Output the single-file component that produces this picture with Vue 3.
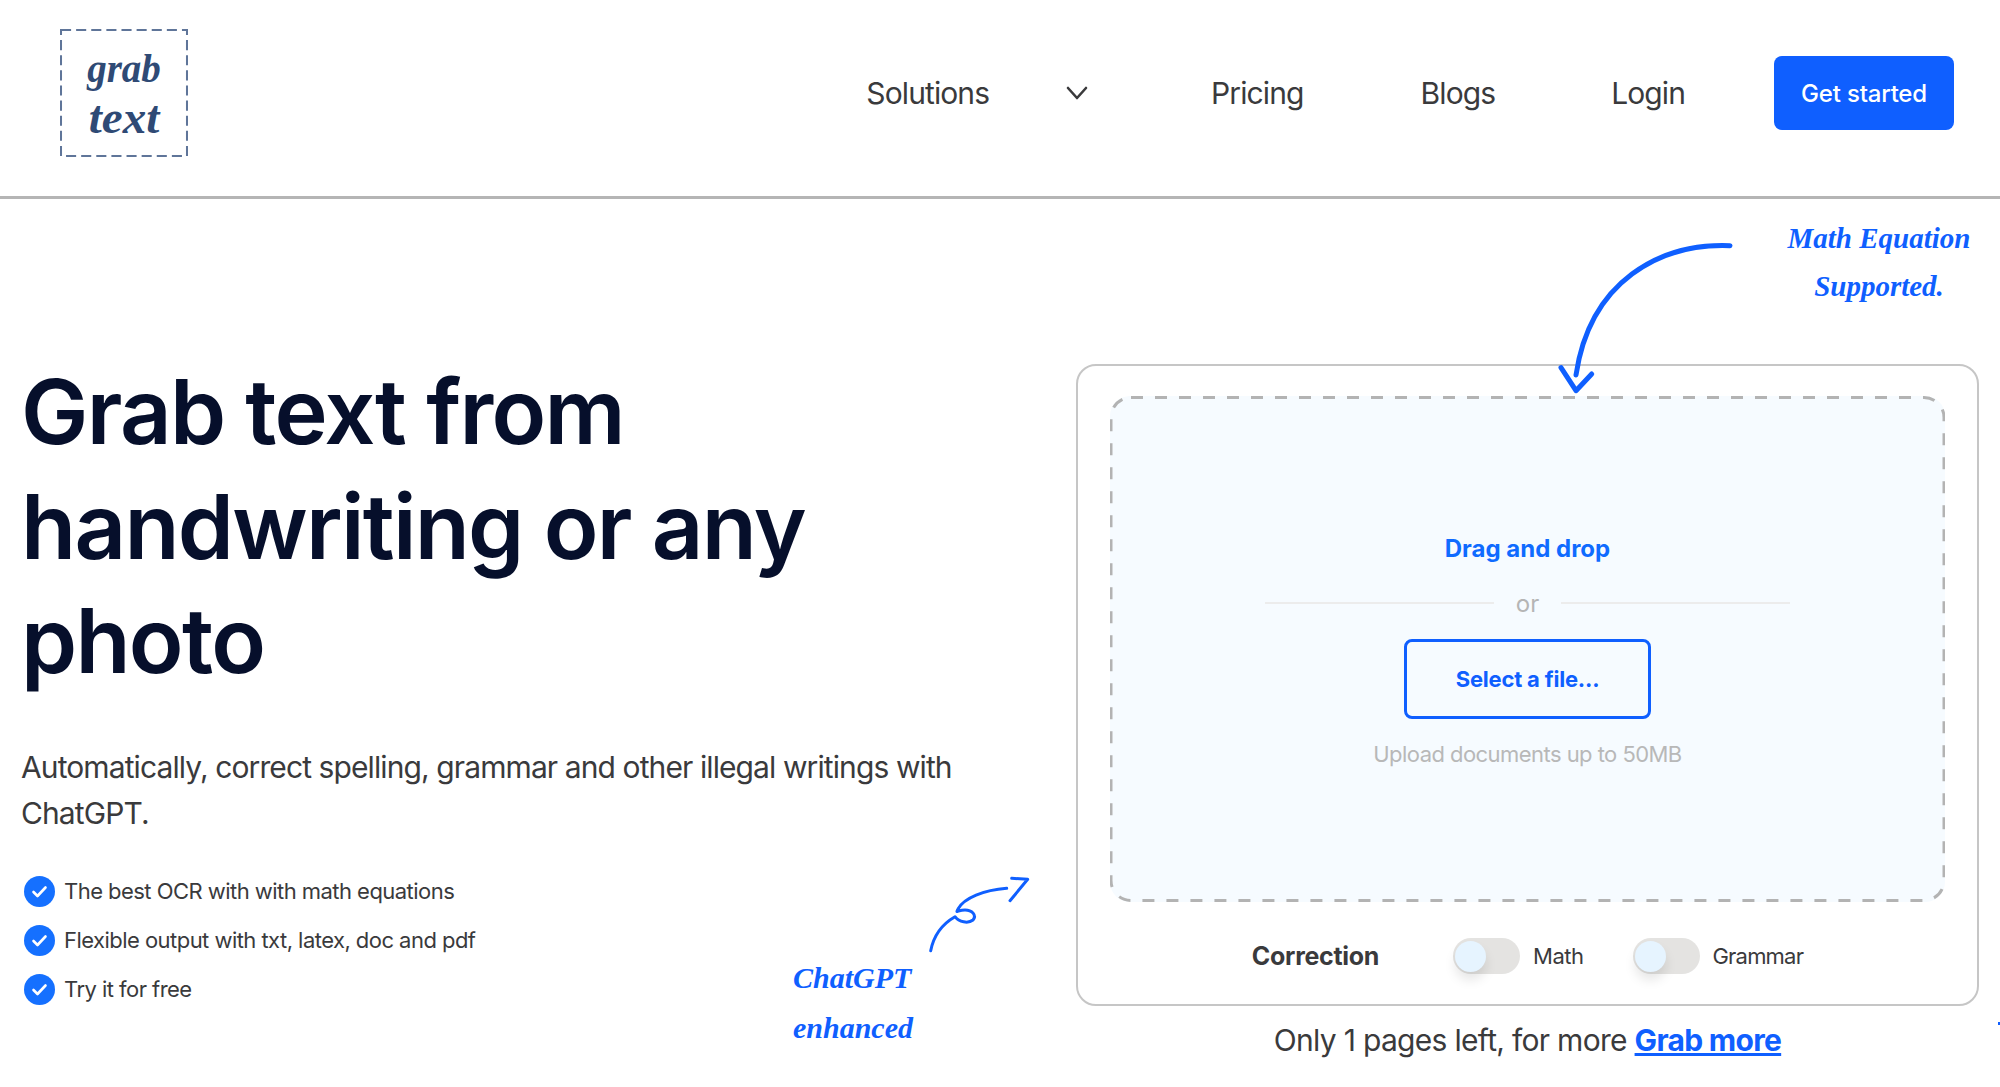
<template>
  <div class="page">
    <header class="topbar">
      <div class="logo">
        <svg class="dash" viewBox="0 0 127 127" fill="none"><rect x="1" y="1" width="125" height="125" stroke="#5f7599" stroke-width="2" stroke-dasharray="10 5"/></svg>
        <span class="logo-grab">grab</span>
        <span class="logo-text">text</span>
      </div>
      <nav class="nav">
        <a class="nav-link solutions">Solutions</a>
        <svg class="chevron" viewBox="0 0 24 16" fill="none" stroke="#3a3a3c" stroke-width="2.6" stroke-linecap="round" stroke-linejoin="round"><path d="M3 3l9 10 9-10"/></svg>
        <a class="nav-link pricing">Pricing</a>
        <a class="nav-link blogs">Blogs</a>
        <a class="nav-link login">Login</a>
        <button class="cta">Get started</button>
      </nav>
    </header>

    <main class="hero">
      <section class="intro">
        <h1>Grab text from handwriting or any photo</h1>
        <p class="sub">Automatically, correct spelling, grammar and other illegal writings with ChatGPT.</p>
        <ul class="features">
          <li v-for="item in features" :key="item">
            <svg class="tick" viewBox="0 0 31 31"><circle cx="15.5" cy="15.5" r="15.5" fill="#1570ff"/><path d="M9.5 16l4 4 8-8.500" fill="none" stroke="#fff" stroke-width="2.600" stroke-linecap="round" stroke-linejoin="round"/></svg>
            <span>{{ item }}</span>
          </li>
        </ul>
      </section>

      <section class="tool">
        <div class="card">
          <div class="drop">
            <svg class="dash" viewBox="0 0 835 506" fill="none"><rect x="1" y="1.5" width="833" height="503" rx="20" stroke="#b3b3b3" stroke-width="3" stroke-dasharray="12 12"/></svg>
            <div class="drag">Drag and drop</div>
            <div class="divider"><i></i><span>or</span><i></i></div>
            <button class="select">Select a file...</button>
            <div class="limit">Upload documents up to 50MB</div>
          </div>
          <div class="options">
            <strong>Correction</strong>
            <span class="switch"><b></b></span>
            <span class="opt-label first">Math</span>
            <span class="switch"><b></b></span>
            <span class="opt-label grammar">Grammar</span>
          </div>
        </div>
        <p class="left-note">Only 1 pages left, for more <a>Grab more</a></p>
      </section>
    </main>

    <div class="note note-math">Math Equation<br>Supported.</div>
    <svg class="arrow arrow-math" viewBox="0 0 180 160" fill="none" stroke="#0f5fff" stroke-width="5" stroke-linecap="round" stroke-linejoin="round">
      <path d="M170 4.700C100 2 30 40 16 134"/>
      <path d="M1 126.700L16 149.700L31.700 133"/>
    </svg>
    <div class="note note-gpt">ChatGPT<br>enhanced</div>
    <svg class="arrow arrow-gpt" viewBox="0 0 110 90" fill="none" stroke="#0f5fff" stroke-width="3" stroke-linecap="round" stroke-linejoin="round">
      <path d="M2.700 72.700C6 56 16 45 27 38.700C31 44 40 46 45 42C49 37 44 32 37 32C30 32 27 36 30 31C36 20 56 12 78.700 10.300"/>
      <path d="M83.700 .3L99.700 1.300L82 22.700"/>
    </svg>
    <span class="edge-dot"></span>
  </div>
</template>

<script setup>
const features = [
  'The best OCR with with math equations',
  'Flexible output with txt, latex, doc and pdf',
  'Try it for free',
]
</script>

<style>
html, body {
  margin: 0;
  background: #fff;
}
</style>

<style scoped>
.page {
  position: relative;
  width: 2000px;
  height: 1087px;
  overflow: hidden;
  background: #fff;
  font-family: Inter, "Liberation Sans", sans-serif;
  color: #3a3a3c;
}

.topbar {
  display: flex;
  justify-content: space-between;
  align-items: center;
  height: 196px;
  padding: 0 46px 0 60px;
  border-bottom: 3px solid #b5b5b5;
}

.logo {
  position: relative;
  display: flex;
  flex-direction: column;
  align-items: center;
  justify-content: center;
  width: 128px;
  height: 128px;
  box-sizing: border-box;
  padding-top: 5px;
  margin-top: -11px;
  font-family: "Liberation Serif", serif;
  font-style: italic;
  font-weight: 700;
  color: #2f4a75;
}

.dash {
  position: absolute;
  left: 0;
  top: 0;
  width: 100%;
  height: 100%;
}

.logo-grab {
  font-size: 39px;
  line-height: 44px;
}

.logo-text {
  font-size: 47px;
  line-height: 53px;
}

.nav {
  display: flex;
  align-items: center;
  margin-top: -10px;
}

.nav-link {
  font-size: 30px;
  letter-spacing: -0.9px;
}

.chevron {
  width: 24px;
  height: 16px;
  margin-left: 76px;
}

.pricing { margin-left: 122px; }
.blogs { margin-left: 117px; }
.login { margin-left: 116px; }

.cta {
  width: 180px;
  height: 74px;
  margin-left: 89px;
  border: none;
  border-radius: 8px;
  background: #0f5fff;
  color: #fff;
  font-family: inherit;
  font-size: 24px;
  font-weight: 500;
  letter-spacing: -0.2px;
}

.hero {
  display: flex;
  justify-content: space-between;
  padding: 0 21px;
}

.intro {
  width: 960px;
  padding-top: 156px;
}

h1 {
  margin: 0;
  width: 860px;
  font-size: 90px;
  line-height: 114.5px;
  font-weight: 600;
  letter-spacing: -1.7px;
  color: #060f2b;
}

.sub {
  margin: 45px 0 0;
  font-size: 30px;
  line-height: 46px;
  letter-spacing: -0.9px;
}

.features {
  margin: 40px 0 0 3px;
  padding: 0;
  list-style: none;
}

.features li {
  display: flex;
  align-items: center;
  gap: 9px;
  height: 31px;
  margin-bottom: 18px;
  font-size: 22px;
  letter-spacing: -0.54px;
}

.tick {
  width: 31px;
  height: 31px;
}

.tool {
  width: 903px;
  padding-top: 165px;
}

.card {
  height: 642px;
  box-sizing: border-box;
  padding: 30px 32px 0;
  border: 2px solid #c6c6c6;
  border-radius: 20px;
}

.drop {
  position: relative;
  display: flex;
  flex-direction: column;
  align-items: center;
  height: 506px;
  box-sizing: border-box;
  padding-top: 138px;
  border-radius: 20px;
  background: #f6fbff;
}

.drag {
  font-size: 24px;
  line-height: 30px;
  font-weight: 700;
  color: #0f6bff;
}

.divider {
  display: flex;
  align-items: center;
  gap: 22px;
  width: 525px;
  height: 30px;
  margin-top: 24px;
  font-size: 24px;
  color: #b5b5b5;
}

.divider i {
  flex: 1;
  height: 2px;
  background: #ececec;
}

.select {
  position: relative;
  width: 247px;
  height: 80px;
  margin-top: 21px;
  border: 3px solid #0f5fff;
  border-radius: 8px;
  background: transparent;
  color: #0f5fff;
  font-family: inherit;
  font-size: 22px;
  font-weight: 700;
  letter-spacing: -0.2px;
}

.limit {
  margin-top: 20px;
  font-size: 22px;
  line-height: 30px;
  letter-spacing: -0.55px;
  color: #b8b8b8;
}

.options {
  display: flex;
  justify-content: center;
  align-items: center;
  height: 108px;
  font-size: 22px;
  letter-spacing: -0.5px;
}

.options strong {
  margin-right: 74px;
  font-size: 25px;
  font-weight: 700;
  letter-spacing: -0.3px;
}

.switch {
  position: relative;
  width: 67px;
  height: 36px;
  margin-right: 13px;
  border-radius: 18px;
  background: #e4e3e1;
}

.switch b {
  position: absolute;
  left: 2px;
  top: 3px;
  width: 31px;
  height: 31px;
  border-radius: 50%;
  background: #e6f4ff;
  box-shadow: 0 8px 12px rgba(0, 0, 0, 0.1);
}

.opt-label.first {
  margin-right: 49px;
}

.opt-label.grammar {
  letter-spacing: -0.8px;
}

.left-note {
  margin: 14px 0 0;
  text-align: center;
  font-size: 30px;
  line-height: 40px;
  letter-spacing: -0.7px;
}

.left-note a {
  color: #0f5fff;
  font-weight: 700;
  text-decoration: underline;
}

.note {
  position: absolute;
  font-family: "Liberation Serif", serif;
  font-style: italic;
  font-weight: 700;
  white-space: nowrap;
  text-align: center;
  color: #0f5fff;
  font-size: 29px;
  line-height: 48px;
}

.note-math {
  left: 1779px;
  top: 214px;
  width: 200px;
}

.note-gpt {
  left: 793px;
  top: 953px;
  font-size: 30px;
  line-height: 50px;
  text-align: left;
}

.arrow {
  position: absolute;
  overflow: visible;
}

.arrow-math {
  left: 1560px;
  top: 241px;
  width: 180px;
  height: 160px;
}

.arrow-gpt {
  left: 928px;
  top: 878px;
  width: 110px;
  height: 90px;
}

.edge-dot {
  position: absolute;
  left: 1998px;
  top: 1022px;
  width: 2px;
  height: 3px;
  background: #0f5fff;
}
</style>
